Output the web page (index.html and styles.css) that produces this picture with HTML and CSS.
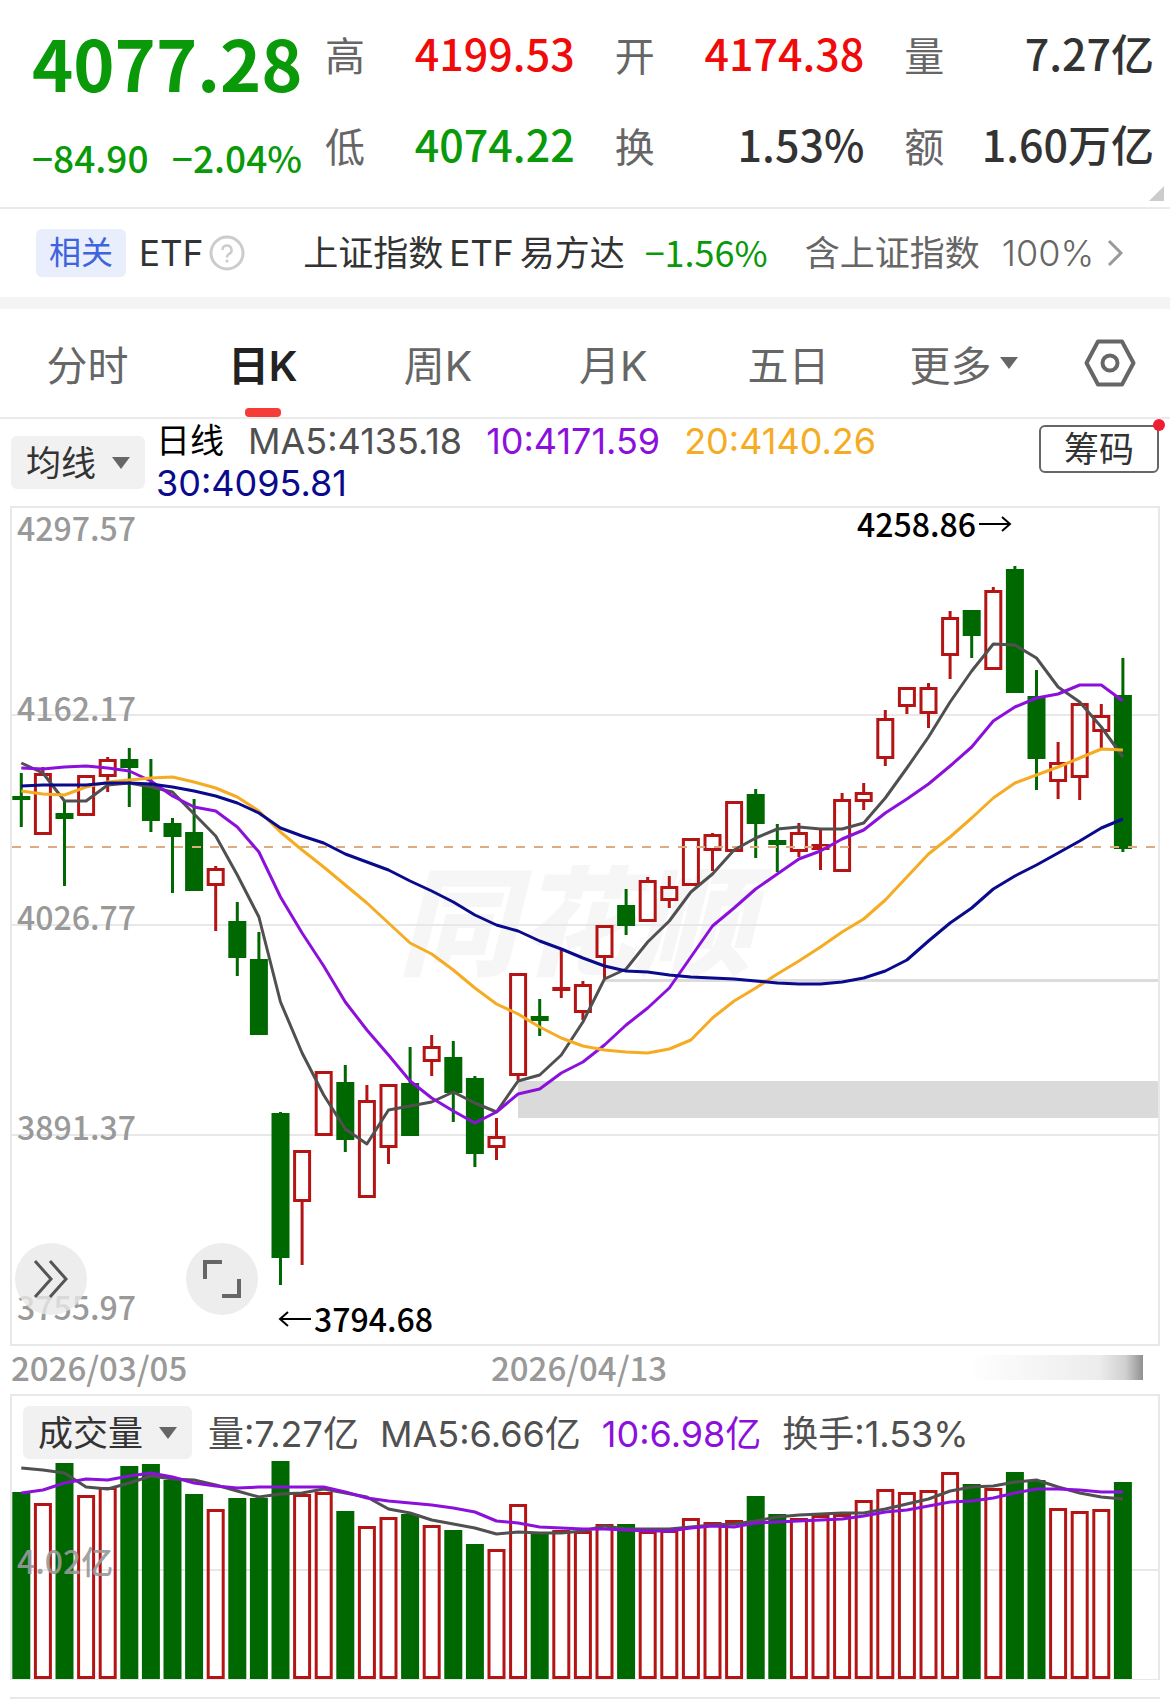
FILE: index.html
```html
<!DOCTYPE html>
<html lang="zh-CN">
<head>
    <meta charset="utf-8">
    <meta name="viewport" content="width=device-width">
    <title>上证指数</title>
    <link rel="stylesheet" href="styles.css">
</head>

<body>
    <header class="quote">
        <div class="quote-main">
            <p class="price">4077.28</p>
            <p class="change"><span>−84.90</span><span>−2.04%</span></p>
        </div>
        <dl class="stats">
            <div class="stat"><dt>高</dt><dd class="up">4199.53</dd></div>
            <div class="stat"><dt>开</dt><dd class="up">4174.38</dd></div>
            <div class="stat"><dt>量</dt><dd>7.27亿</dd></div>
            <div class="stat"><dt>低</dt><dd class="down">4074.22</dd></div>
            <div class="stat"><dt>换</dt><dd>1.53%</dd></div>
            <div class="stat"><dt>额</dt><dd>1.60万亿</dd></div>
        </dl>
        <span class="corner"></span>
    </header>

    <a class="etf" href="#">
        <span class="tag">相关</span>
        <span class="etf-label">ETF</span>
        <svg class="help" width="36" height="36" viewBox="0 0 36 36">
            <circle cx="18" cy="18" r="16" fill="none" stroke="#ccc" stroke-width="3"/>
            <path d="M13.500 15a4.500 4.500 0 1 1 6.500 4c-1.500 1-2 1.500-2 3.500" fill="none" stroke="#ccc" stroke-width="2.500"/>
            <circle cx="18" cy="26" r="1.600" fill="#ccc"/>
        </svg>
        <span class="etf-name"><span>上证指数</span><span>ETF</span><span>易方达</span></span>
        <span class="etf-change">−1.56%</span>
        <span class="etf-hold">含上证指数</span>
        <span class="etf-rate">100%</span>
        <svg class="more" width="16" height="28" viewBox="0 0 16 28">
            <path d="M2 2l12 12L2 26" fill="none" stroke="#999" stroke-width="3"/>
        </svg>
    </a>

    <nav class="tabs">
        <button class="tab">分时</button>
        <button class="tab active">日K</button>
        <button class="tab">周K</button>
        <button class="tab">月K</button>
        <button class="tab">五日</button>
        <button class="tab">更多<span class="caret"></span></button>
        <button class="tab" aria-label="设置">
            <svg width="52" height="48" viewBox="0 0 52 48">
                <path d="M14 2.500h24L49.500 24L38 45.500H14L2.500 24z" fill="none" stroke="#666" stroke-width="4" stroke-linejoin="round"/>
                <circle cx="26" cy="24" r="7.500" fill="none" stroke="#666" stroke-width="4"/>
            </svg>
        </button>
    </nav>

    <section class="ma">
        <label class="picker">
            <select aria-label="主图指标"><option>均线</option></select>
            <span class="caret"></span>
        </label>
        <p class="legend">
            <span class="name">日线</span>
            <span>MA5:4135.18</span>
            <span class="ma10">10:4171.59</span>
            <span class="ma20">20:4140.26</span>
            <span class="ma30">30:4095.81</span>
        </p>
        <button class="chip">筹码<i class="dot"></i></button>
    </section>

    <section class="panel">
        <svg class="chart js-kline" viewBox="12 508 1146 836">
            <text class="watermark" x="398" y="966">同花顺</text>
            <path class="grid" d="M12 715H1158M12 925H1158M12 1135H1158"/>
            <rect x="605" y="979" width="553" height="3" fill="#dcdcdc"/>
            <rect x="518" y="1081" width="640" height="37" fill="#dadada"/>
            <g class="js-candles"></g>
            <path d="M12 847H1158" stroke="#dcab82" stroke-width="2" stroke-dasharray="9 9"/>
            <g class="js-lines"></g>
            <g class="axis">
                <text x="17" y="541">4297.57</text>
                <text x="17" y="721">4162.17</text>
                <text x="17" y="930">4026.77</text>
                <text x="17" y="1140">3891.37</text>
                <text x="17" y="1320">3755.97</text>
            </g>
            <text class="peak" x="857" y="537">4258.86</text>
            <path class="arrow" d="M979 524h31M1002 517l8 7l-8 7"/>
            <text class="peak" x="314" y="1332">3794.68</text>
            <path class="arrow" d="M311 1319h-31M288 1312l-8 7l8 7"/>
        </svg>
        <div class="tools">
            <button class="round" aria-label="展开">
                <svg width="36" height="40" viewBox="0 0 36 40">
                    <path d="M2 2l16 18L2 38M17 2l16 18L17 38" fill="none" stroke="#555" stroke-width="3"/>
                </svg>
            </button>
            <button class="round" aria-label="全屏">
                <svg width="38" height="38" viewBox="0 0 38 38">
                    <path d="M2 19V2h17M36 19v17H19" fill="none" stroke="#666" stroke-width="4"/>
                </svg>
            </button>
        </div>
    </section>

    <div class="dates">
        <time>2026/03/05</time>
        <time>2026/04/13</time>
        <span class="fade"></span>
    </div>

    <section class="panel volume">
        <div class="volume-head">
            <label class="picker">
                <select aria-label="副图指标"><option>成交量</option></select>
                <span class="caret"></span>
            </label>
            <p class="legend">
                <span>量:7.27亿</span>
                <span>MA5:6.66亿</span>
                <span class="ma10">10:6.98亿</span>
                <span>换手:1.53%</span>
            </p>
        </div>
        <svg class="chart" viewBox="12 1459 1146 220">
            <path class="grid" d="M12 1570H1158"/>
            <g class="js-volume"></g>
            <g class="axis"><text x="17" y="1574" opacity="0.900">4.02亿</text></g>
        </svg>
    </section>

    <div class="next-panel"></div>

    <script src="chart.js"></script>
</body>
</html>
```
FILE: styles.css
```css
*{
    box-sizing:border-box;
    margin:0;
    padding:0;
}

body{
    background-color:white;
    color:#333;
    font-family:Inter, "Noto Sans CJK SC", sans-serif;
    font-size:34px;
}

button, select{
    background:none;
    border:none;
    color:inherit;
    font:inherit;
    cursor:pointer;
}

/* top quote */

.quote{
    position:relative;
    display:flex;
    height:209px;
    padding:7px 16px 0 32px;
    border-bottom:2px solid #ebebeb;
    font-family:"Noto Sans CJK SC", sans-serif;
    font-weight:500;
}

.quote-main{
    width:293px;
    color:#099909;
}

.price{
    font-size:70px;
    font-weight:700;
    line-height:110px;
}

.change{
    display:flex;
    justify-content:space-between;
    width:270px;
    font-size:37px;
    line-height:80px;
}

.stats{
    flex:1;
    display:grid;
    grid-template-columns:repeat(3, 1fr);
    grid-auto-rows:91px;
    column-gap:40px;
}

.stat{
    display:flex;
    justify-content:space-between;
    line-height:91px;
    white-space:nowrap;
}

.stat dt{
    padding-top:2px;
    color:#666;
    font-size:40px;
    font-weight:400;
}

.stat dd{
    font-size:43px;
}

.up{
    color:#f00a0a;
}

.down{
    color:#099909;
}

.corner{
    position:absolute;
    right:6px;
    bottom:6px;
    border-left:15px solid transparent;
    border-bottom:15px solid #ccc;
}

/* related etf */

.etf{
    display:flex;
    align-items:center;
    height:100px;
    padding-left:36px;
    border-bottom:12px solid #f4f4f4;
    color:#333;
    font-size:35px;
    line-height:50px;
    text-decoration:none;
    white-space:nowrap;
}

.tag{
    padding:0 13px;
    border-radius:6px;
    background-color:#e8eefc;
    color:#3f63dd;
    font-size:32px;
    line-height:48px;
}

.etf-label{
    margin-left:13px;
}

.help{
    margin-left:6px;
}

.etf-name{
    display:flex;
    gap:6px;
    margin-left:58px;
}

.etf-change{
    margin-left:20px;
    padding-bottom:4px;
    color:#099909;
    font-family:"Noto Sans CJK SC", sans-serif;
    font-size:36px;
}

.etf-hold{
    margin-left:37px;
    color:#666;
}

.etf-rate{
    margin-left:22px;
    color:#666;
    font-size:36px;
    font-weight:300;
}

.more{
    margin-left:13px;
}

/* period tabs */

.tabs{
    display:grid;
    grid-template-columns:repeat(6, 3fr) 2fr;
    height:110px;
    padding-right:2px;
    border-bottom:2px solid #ebebeb;
}

.tab{
    position:relative;
    display:flex;
    align-items:center;
    justify-content:center;
    color:#666;
    font-size:41px;
}

.active{
    color:#222;
    font-weight:600;
}

.active::after{
    content:"";
    position:absolute;
    bottom:0;
    width:36px;
    height:9px;
    border-radius:4px;
    background-color:#f53d37;
}

.caret{
    border:9px solid transparent;
    border-top:12px solid #666;
    border-bottom:none;
}

.tab .caret{
    margin-left:8px;
}

/* indicator rows */

.ma{
    display:flex;
    align-items:flex-start;
    min-height:87px;
    padding:0 11px;
}

.picker{
    display:flex;
    align-items:center;
    height:53px;
    padding:0 15px;
    border-radius:6px;
    background-color:#f1f1f1;
}

.picker select{
    appearance:none;
    height:53px;
    margin-right:15px;
    font-size:35px;
}

.ma .picker{
    margin-top:17px;
}

.legend{
    flex:1;
    display:flex;
    flex-wrap:wrap;
    column-gap:21px;
    color:#505050;
    font-size:36px;
    line-height:42px;
    white-space:nowrap;
}

.ma .legend{
    column-gap:24px;
    margin:1px 100px 0 11px;
}

.legend .name{
    color:black;
    font-size:34px;
}

.legend .ma10{
    color:#8c10dc;
}

.legend .ma20{
    color:#f5ac22;
}

.legend .ma30{
    color:#0a0a8c;
}

.chip{
    position:relative;
    width:120px;
    height:48px;
    margin-top:6px;
    border:2px solid #666;
    border-radius:6px;
    font-size:35px;
    line-height:42px;
}

.dot{
    position:absolute;
    top:-8px;
    right:-8px;
    width:12px;
    height:12px;
    border-radius:50%;
    background-color:#f01e32;
}

/* charts */

.panel{
    position:relative;
    margin:0 10px;
    border:2px solid #e8e8e8;
}

.chart{
    display:block;
    width:100%;
}

.grid{
    stroke:#e8e8e8;
    stroke-width:2;
}

.watermark{
    fill:#f6f6f6;
    font-family:"Noto Sans CJK SC", sans-serif;
    font-size:118px;
    font-style:italic;
    font-weight:900;
}

.axis{
    fill:#999;
    font-family:"Noto Sans CJK SC", sans-serif;
    font-size:32px;
    font-weight:500;
}

.peak{
    fill:black;
    font-family:"Noto Sans CJK SC", sans-serif;
    font-size:32px;
    font-weight:500;
}

.arrow{
    fill:none;
    stroke:black;
    stroke-width:2;
}

.tools{
    position:absolute;
    left:3px;
    bottom:29px;
    display:flex;
    gap:99px;
}

.round{
    display:flex;
    align-items:center;
    justify-content:center;
    width:72px;
    height:72px;
    border-radius:50%;
    background-color:rgba(232, 232, 232, 0.8);
}

.dates{
    display:flex;
    align-items:flex-start;
    height:48px;
    padding:0 27px 0 11px;
    color:#999;
    font-family:"Noto Sans CJK SC", sans-serif;
    font-size:33px;
    font-weight:500;
    line-height:42px;
}

.dates time{
    flex:0 0 42.4%;
}

.dates time + time{
    flex:1;
}

.fade{
    width:175px;
    height:25px;
    margin-top:9px;
    background:linear-gradient(to right, white, #ececec 75%, #d0d0d0 90%, #909090);
}

.volume{
    border-bottom-width:1px;
}

.volume-head{
    display:flex;
    align-items:center;
    gap:16px;
    padding:10px 11px 0;
}

.volume-head .legend{
    padding-top:2px;
}

.next-panel{
    height:3px;
    margin:17px 10px 0;
    border-top:2px solid #e8e8e8;
}
```
FILE: chart.js
```javascript
const STEP = 21.6;
const FIRST = 21.3;
const BODY = 18;
const RED = '#b41414';
const GREEN = '#006800';

// direction, high, body top, body bottom, low
const candles = [
    ['g', 773, 796, 800, 827], ['r', 767, 773, 835, 835], ['g', 802, 813, 819, 886],
    ['r', 775, 775, 816, 816], ['r', 757, 759, 777, 792], ['g', 748, 759, 768, 807],
    ['g', 759, 786, 821, 832], ['g', 818, 823, 837, 893], ['g', 799, 832, 891, 891],
    ['r', 866, 868, 886, 931], ['g', 902, 921, 958, 976], ['g', 932, 959, 1035, 1035],
    ['g', 1112, 1113, 1258, 1285], ['r', 1150, 1150, 1202, 1265], ['r', 1071, 1071, 1136, 1136],
    ['g', 1065, 1082, 1140, 1152], ['r', 1085, 1100, 1198, 1198], ['r', 1084, 1084, 1148, 1164],
    ['g', 1047, 1083, 1136, 1136], ['r', 1035, 1046, 1062, 1076], ['g', 1041, 1057, 1093, 1122],
    ['g', 1076, 1078, 1154, 1167], ['r', 1118, 1136, 1148, 1160], ['r', 973, 973, 1076, 1080],
    ['g', 999, 1016, 1021, 1036], ['r', 950, 987, 991, 998], ['r', 981, 984, 1013, 1020],
    ['r', 925, 925, 958, 979], ['g', 889, 905, 926, 935], ['r', 877, 880, 922, 922],
    ['r', 876, 886, 901, 908], ['r', 838, 838, 886, 886], ['r', 833, 834, 851, 871],
    ['r', 801, 801, 852, 852], ['g', 789, 794, 824, 858], ['g', 824, 840, 845, 872],
    ['r', 823, 832, 852, 857], ['r', 828, 844, 850, 870], ['r', 793, 799, 872, 872],
    ['r', 783, 792, 802, 810], ['r', 710, 718, 759, 766], ['r', 687, 687, 707, 714],
    ['r', 683, 687, 714, 728], ['r', 611, 617, 656, 679], ['g', 610, 610, 636, 658],
    ['r', 587, 590, 670, 670], ['g', 566, 569, 693, 693], ['g', 670, 696, 759, 790],
    ['r', 742, 762, 782, 799], ['r', 703, 703, 778, 800], ['r', 704, 715, 732, 748],
    ['g', 658, 695, 849, 852]
];

const ma5 = [763, 773, 801, 801, 785, 783, 787, 792, 814, 836, 875, 917, 1002, 1053, 1095, 1129, 1144, 1110,
    1106, 1102, 1092, 1103, 1112, 1081, 1075, 1055, 1022, 979, 969, 942, 921, 892, 874, 850, 838, 829, 827, 829,
    829, 823, 798, 768, 737, 702, 671, 644, 645, 658, 687, 702, 727, 757];
const ma10 = [768, 769, 767, 766, 768, 771, 781, 796, 807, 811, 827, 852, 897, 933, 966, 1002, 1030, 1055,
    1081, 1098, 1111, 1123, 1112, 1094, 1089, 1073, 1062, 1045, 1025, 1008, 988, 957, 926, 908, 889, 874, 859, 851,
    839, 830, 813, 799, 784, 766, 747, 721, 707, 698, 694, 685, 685, 701];
const ma20 = [791, 794, 795, 787, 782, 780, 778, 777, 782, 788, 797, 811, 832, 850, 867, 885, 903, 923,
    943, 954, 970, 988, 1004, 1014, 1027, 1038, 1046, 1050, 1052, 1053, 1049, 1040, 1018, 1001, 988, 974, 961, 947,
    932, 919, 900, 877, 854, 837, 818, 798, 783, 775, 767, 758, 749, 750];
const ma30 = [786, 785, 785, 785, 783, 783, 784, 787, 791, 796, 803, 813, 828, 836, 843, 854, 862, 870,
    881, 891, 902, 915, 925, 931, 941, 949, 958, 966, 971, 972, 975, 977, 978, 979, 981, 983, 984, 984,
    982, 978, 971, 960, 941, 923, 908, 889, 876, 865, 853, 841, 828, 819];

const volTop = [1492, 1503, 1463, 1495, 1487, 1466, 1464, 1480, 1494, 1509, 1498, 1498, 1461, 1494, 1492, 1511,
    1526, 1517, 1514, 1525, 1530, 1544, 1549, 1504, 1532, 1530, 1531, 1524, 1524, 1531, 1530, 1518, 1522, 1520,
    1496, 1514, 1518, 1515, 1514, 1500, 1489, 1492, 1490, 1472, 1484, 1488, 1472, 1480, 1508, 1511, 1509, 1482];
const vol5 = [1468, 1470, 1473, 1487, 1489, 1483, 1476, 1479, 1480, 1485, 1491, 1497, 1494, 1493, 1489, 1493,
    1497, 1509, 1513, 1520, 1524, 1528, 1534, 1532, 1533, 1533, 1531, 1526, 1529, 1529, 1529, 1527, 1525, 1524,
    1521, 1517, 1515, 1514, 1513, 1513, 1509, 1504, 1499, 1491, 1487, 1486, 1482, 1480, 1487, 1493, 1497, 1499];
const vol10 = [1493, 1490, 1483, 1479, 1480, 1476, 1473, 1477, 1483, 1486, 1488, 1487, 1487, 1487, 1487, 1492,
    1498, 1501, 1503, 1505, 1508, 1512, 1521, 1523, 1527, 1528, 1529, 1529, 1530, 1531, 1531, 1528, 1526, 1527,
    1523, 1522, 1521, 1520, 1519, 1516, 1512, 1510, 1506, 1502, 1501, 1498, 1493, 1489, 1489, 1490, 1492, 1492];

function xOf(i){
    return FIRST + i * STEP;
}

function bar(x, top, bottom, dir){
    if (dir === 'g'){
        return `<rect x="${x - BODY / 2}" y="${top}" width="${BODY}" height="${bottom - top}" fill="${GREEN}"/>`;
    }
    // hollow body, the stroke stays inside the bar
    return `<rect x="${x - BODY / 2 + 1.5}" y="${top + 1.5}" width="${BODY - 3}" height="${Math.max(bottom - top - 3, 1)}"
        fill="none" stroke="${RED}" stroke-width="3"/>`;
}

function line(values, color){
    const points = values.map((y, i) => `${xOf(i)},${y}`).join(' ');
    return `<polyline points="${points}" fill="none" stroke="${color}" stroke-width="3" stroke-linejoin="round"/>`;
}

document.querySelector('.js-candles').innerHTML = candles.map(([dir, high, top, bottom, low], i) => {
    const x = xOf(i);
    const color = dir === 'g' ? GREEN : RED;
    return `<path d="M${x} ${high}V${top}M${x} ${bottom}V${low}" stroke="${color}" stroke-width="3"/>`
        + bar(x, top, bottom, dir);
}).join('');

document.querySelector('.js-lines').innerHTML =
    line(ma5, '#505050') + line(ma10, '#8c10dc') + line(ma20, '#f5ac22') + line(ma30, '#0a0a8c');

document.querySelector('.js-volume').innerHTML =
    volTop.map((top, i) => bar(xOf(i), top, 1679, candles[i][0])).join('')
    + line(vol5, '#505050') + line(vol10, '#8c10dc');
```
